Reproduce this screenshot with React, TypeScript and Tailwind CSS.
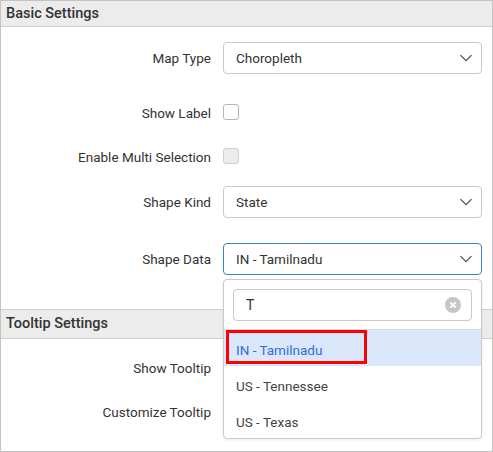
import React from "react";

const font = { fontFamily: "Roboto, 'Liberation Sans', sans-serif" };

function Chevron() {
  return (
    <svg width="14" height="8" viewBox="0 0 14 8" fill="none" className="shrink-0">
      <path d="M1.5 1.2l5.5 5.5 5.5-5.5" stroke="#4a4a4a" strokeWidth="1.1" />
    </svg>
  );
}

function Dropdown({ value, active }: { value: string; active?: boolean }) {
  return (
    <div
      className={`w-[259px] h-[32px] rounded-[4px] border flex items-center justify-between pl-[12px] pr-[8px] bg-white ${
        active ? "border-[#3a7de0]" : "border-[#c9c9c9]"
      }`}
    >
      <span className="text-[13.5px] text-[#333]">{value}</span>
      <Chevron />
    </div>
  );
}

function Checkbox({ disabled }: { disabled?: boolean }) {
  return (
    <div
      className={`w-[16px] h-[16px] -mt-[2px] rounded-[3px] border ${
        disabled ? "bg-[#ececec] border-[#d0d0d0]" : "bg-white border-[#b5b5b5]"
      }`}
    />
  );
}

function Row({ label, children, className }: { label: string; children: React.ReactNode; className: string }) {
  return (
    <div className={`flex items-center h-[32px] ${className}`}>
      <div className="w-[210px] text-right text-[13.5px] text-[#333]">{label}</div>
      <div className="ml-[12px] flex items-center">{children}</div>
    </div>
  );
}

function Header({ title, className }: { title: string; className?: string }) {
  return (
    <div className={`bg-[#ececec] border-[#cfcfcf] flex items-center pl-[5px] text-[14.5px] font-medium text-[#333] ${className ?? ""}`}>
      {title}
    </div>
  );
}

export default function App() {
  const options = ["IN - Tamilnadu", "US - Tennessee", "US - Texas"];
  return (
    <div style={font} className="relative w-[493px] h-[452px] border border-[#c4c4c4] bg-white overflow-hidden">
      <Header title="Basic Settings" className="h-[26px] border-b" />

      <Row label="Map Type" className="mt-[15px]">
        <Dropdown value="Choropleth" />
      </Row>
      <Row label="Show Label" className="mt-[23px]">
        <Checkbox />
      </Row>
      <Row label="Enable Multi Selection" className="mt-[12px]">
        <Checkbox disabled />
      </Row>
      <Row label="Shape Kind" className="mt-[13px]">
        <Dropdown value="State" />
      </Row>
      <Row label="Shape Data" className="mt-[25px]">
        <Dropdown value="IN - Tamilnadu" active />
      </Row>

      <Header title="Tooltip Settings" className="mt-[34px] h-[30px] border-y" />

      <Row label="Show Tooltip" className="mt-[13px]">
        <div />
      </Row>
      <Row label="Customize Tooltip" className="mt-[12px]">
        <div />
      </Row>

      {/* popup of the Shape Data dropdown */}
      <div className="absolute left-[222px] top-[278px] w-[259px] h-[160px] border border-[#cacaca] rounded-[4px] bg-white shadow-[0_1px_3px_rgba(0,0,0,0.08)]">
        <div className="px-[9px] pt-[9px] pb-[8px] border-b border-[#dcdcdc]">
          <div className="h-[32px] border border-[#c9c9c9] rounded-[4px] flex items-center justify-between pl-[12px] pr-[10px]">
            <span className="text-[14px] text-[#333]">T</span>
            <svg width="16" height="16" viewBox="0 0 16 16">
              <circle cx="8" cy="8" r="8" fill="#c6c6c6" />
              <path d="M5.3 5.3l5.4 5.4M10.7 5.3l-5.4 5.4" stroke="#fff" strokeWidth="1.8" />
            </svg>
          </div>
        </div>
        {options.map((o, i) => (
          <div
            key={o}
            className={`h-[36px] flex items-center pl-[12px] pt-[4px] text-[13.5px] ${
              i === 0 ? "bg-[#dbe7fb] text-[#2f6fd8]" : "text-[#444]"
            }`}
          >
            {o}
          </div>
        ))}
        <div className="absolute left-[2px] top-[50px] w-[141px] h-[34px] border-[3px] border-[#ff0000]" />
      </div>
    </div>
  );
}
